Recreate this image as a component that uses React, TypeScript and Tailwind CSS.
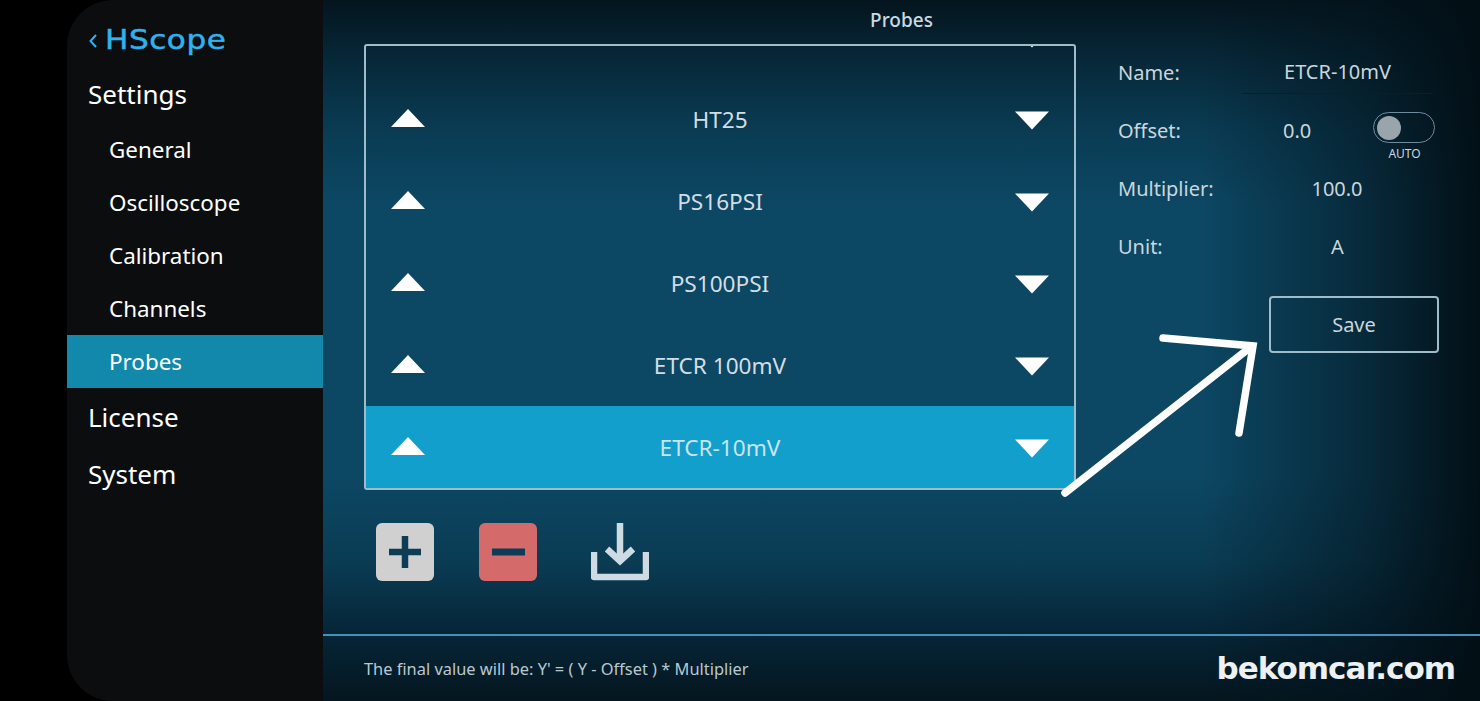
const rows = ['ETCR 100A', 'HT25', 'PS16PSI', 'PS100PSI', 'ETCR 100mV', 'ETCR-10mV']
const subItems = ['General', 'Oscilloscope', 'Calibration', 'Channels', 'Probes']

function Up() {
  return (
    <svg width="34" height="20" viewBox="0 0 34 20" className="shrink-0">
      <polygon points="17,0 34,18 0,18" fill="#fff" />
    </svg>
  )
}

function Down() {
  return (
    <svg width="34" height="22" viewBox="0 0 34 22" className="shrink-0">
      <polygon points="0,3.5 34,3.5 17,21.5" fill="#fff" />
    </svg>
  )
}

function Sidebar() {
  return (
    <aside className="flex w-[256px] shrink-0 flex-col rounded-l-[46px] bg-[#0c0d0f] text-white">
      <div className="flex h-[78px] items-center pl-[21px] pt-[1px] text-[#2fb2ee]">
        <svg width="10" height="16" viewBox="0 0 10 16" className="mr-[7px] mt-[2px]">
          <path d="M8 2 L2.5 8 L8 14" fill="none" stroke="#2fb2ee" strokeWidth="2" />
        </svg>
        <span className="origin-left scale-x-[1.15] font-['DejaVu_Sans'] text-[27px] leading-none tracking-[0.5px] [-webkit-text-stroke:0.5px_#2fb2ee]">HScope</span>
      </div>
      <div className="flex h-[32px] items-center pl-[21px] text-[26px]">Settings</div>
      <nav className="mt-[13px] flex flex-col">
        {subItems.map((s) => (
          <div
            key={s}
            className={`flex h-[53px] items-center pl-[42px] text-[22.4px] ${s === 'Probes' ? 'bg-[#1288ab]' : ''}`}
          >
            {s}
          </div>
        ))}
      </nav>
      <div className="mt-[13px] flex h-[32px] items-center pl-[21px] text-[26px]">License</div>
      <div className="mt-[25px] flex h-[32px] items-center pl-[21px] text-[26px]">System</div>
    </aside>
  )
}

function ProbeList() {
  return (
    <div className="flex h-[446px] w-[712px] flex-col justify-end overflow-hidden rounded-[3px] border-2 border-[#9fbccb]">
      {rows.map((r) => (
        <div
          key={r}
          className={`flex h-[82px] shrink-0 items-center justify-between pl-[25px] pr-[25px] text-[22.6px] ${
            r === 'ETCR-10mV' ? 'bg-[#139fcb] text-[#c9e4ee]' : 'text-[#d3dee4]'
          }`}
        >
          <Up />
          <span className="pt-[2px]">{r}</span>
          <Down />
        </div>
      ))}
    </div>
  )
}

function Toolbar() {
  return (
    <div className="mt-[33px] flex items-center pl-[12px]">
      <div className="flex h-[58px] w-[58px] items-center justify-center rounded-[6px] bg-[#d0d0d0]">
        <svg width="32" height="32" viewBox="0 0 32 32">
          <path d="M16 0 V32 M0 16 H32" stroke="#0d3c57" strokeWidth="6.5" />
        </svg>
      </div>
      <div className="ml-[45px] flex h-[58px] w-[58px] items-center justify-center rounded-[6px] bg-[#d46a6a]">
        <svg width="33" height="8" viewBox="0 0 33 8">
          <rect width="33" height="7" y="0.5" fill="#0d3c57" />
        </svg>
      </div>
      <svg width="58" height="58" viewBox="0 0 58 58" className="ml-[54px]" fill="none" stroke="#cfdbe2" strokeWidth="6.5">
        <path d="M3 29 V54 H55 V29" strokeLinejoin="round" />
        <path d="M29 0 V37" />
        <path d="M16 26 L29 38 L42 26" />
      </svg>
    </div>
  )
}

function Details() {
  return (
    <div className="ml-[42px] w-[321px] pt-[9px] text-[20px] text-[#c9d6dd]">
      <div className="flex h-[40px] items-center">
        <span className="w-[124px]">Name:</span>
        <div className="flex h-[41px] w-[191px] items-center justify-center border-b border-[#06202e] pb-[2px]">
          ETCR-10mV
        </div>
      </div>
      <div className="mt-[18px] flex h-[40px] items-center">
        <span className="w-[165px]">Offset:</span>
        <span className="w-[90px]">0.0</span>
        <div className="flex w-[62px] flex-col items-center">
          <div className="mt-[-2px] flex h-[31px] w-[62px] items-center rounded-full border border-[#6f8c9c] pl-[3px]">
            <div className="h-[24px] w-[24px] rounded-full bg-[#9aa5ab]" />
          </div>
          <span className="mt-[5px] h-0 pl-[1px] text-[12px] leading-none">AUTO</span>
        </div>
      </div>
      <div className="mt-[18px] flex h-[40px] items-center">
        <span className="w-[124px]">Multiplier:</span>
        <span className="w-[191px] pr-[1px] text-center">100.0</span>
      </div>
      <div className="mt-[18px] flex h-[40px] items-center">
        <span className="w-[124px]">Unit:</span>
        <span className="w-[191px] text-center">A</span>
      </div>
      <button className="ml-[151px] mt-[29px] flex h-[57px] w-[170px] items-center justify-center rounded-[4px] border-2 border-[#9fbccb] text-[20px] text-[#c9d6dd]">
        Save
      </button>
    </div>
  )
}

export default function App() {
  return (
    <div className="relative flex h-[701px] w-[1480px] overflow-hidden bg-black pl-[67px] font-['Noto_Sans',sans-serif]">
      <Sidebar />
      <main className="flex min-w-0 flex-1 flex-col bg-[linear-gradient(to_right,rgba(3,18,26,0)_76%,rgba(3,18,26,0.55)_90%,rgba(2,14,20,0.97)_100%),linear-gradient(to_bottom,#04151e_0%,#07293a_9%,#0a3c54_19%,#0c4763_29%,#0c4763_68%,#0a3c54_80%,#062638_90%,#04161f_100%)]">
        <div className="flex h-[44px] shrink-0 items-center justify-center pb-[4px] text-[19px] font-medium text-[#ccd9e0]">
          Probes
        </div>
        <div className="flex flex-1 items-start pl-[41px]">
          <div className="flex flex-col">
            <ProbeList />
            <Toolbar />
          </div>
          <Details />
        </div>
        <footer className="flex h-[67px] shrink-0 items-center justify-between border-t-2 border-[#3f93bf] pl-[41px] pr-[25px] text-[16.4px] text-[#b9c9d2]">
          <span className="pt-[2px]">The final value will be: Y' = ( Y - Offset ) * Multiplier</span>
          <span className="font-['DejaVu_Sans'] text-[31px] font-bold leading-none tracking-[-1px] text-[#eef1f3]">bekomcar.com</span>
        </footer>
      </main>
      <svg width="210" height="170" viewBox="0 0 210 170" className="pointer-events-none absolute left-[1055px] top-[332px]" fill="none" stroke="#fff" strokeWidth="7.5" strokeLinecap="round">
        <path d="M10 161 L197 14" />
        <path d="M108 6 L198 14 L184 101" />
      </svg>
    </div>
  )
}
